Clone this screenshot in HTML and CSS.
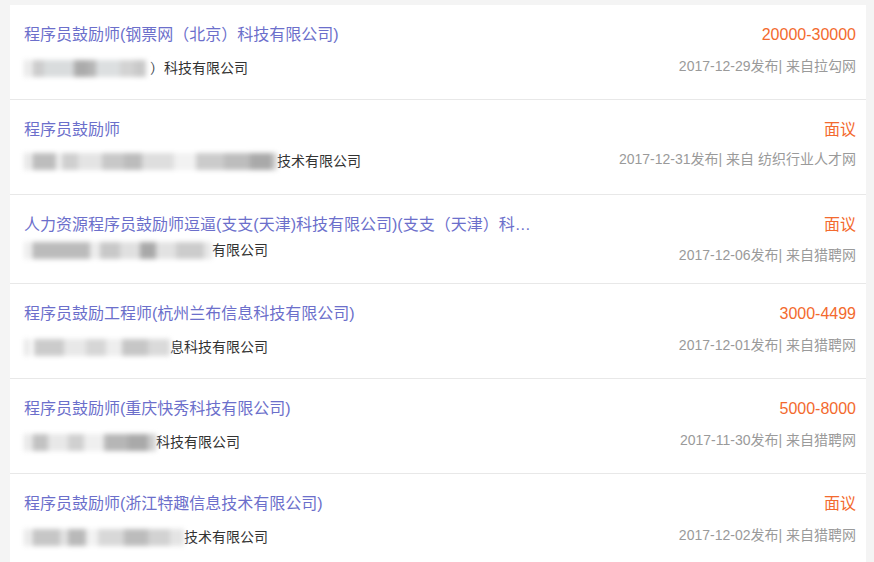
FILE: index.html
```html
<!DOCTYPE html>
<html lang="zh">
<head>
<meta charset="utf-8">
<title>职位列表</title>
<link rel="stylesheet" href="styles.css">
</head>
<body>
<div class="list">
  <div class="row">
    <div class="left">
      <div class="title">程序员鼓励师(钢票网（北京）科技有限公司)</div>
      <div class="company"><span class="blur b1"></span>）科技有限公司</div>
    </div>
    <div class="right">
      <div class="salary">20000-30000</div>
      <div class="date">2017-12-29发布| 来自拉勾网</div>
    </div>
  </div>
  <div class="row">
    <div class="left">
      <div class="title">程序员鼓励师</div>
      <div class="company c2"><span class="blur b2"></span>技术有限公司</div>
    </div>
    <div class="right">
      <div class="salary">面议</div>
      <div class="date d2">2017-12-31发布| 来自 纺织行业人才网</div>
    </div>
  </div>
  <div class="row row-short">
    <div class="left">
      <div class="title">人力资源程序员鼓励师逗逼(支支(天津)科技有限公司)(支支（天津）科…</div>
      <div class="company c3"><span class="blur b3"></span>有限公司</div>
    </div>
    <div class="right">
      <div class="salary">面议</div>
      <div class="date">2017-12-06发布| 来自猎聘网</div>
    </div>
  </div>
  <div class="row">
    <div class="left">
      <div class="title">程序员鼓励工程师(杭州兰布信息科技有限公司)</div>
      <div class="company"><span class="blur b4"></span>息科技有限公司</div>
    </div>
    <div class="right">
      <div class="salary">3000-4499</div>
      <div class="date">2017-12-01发布| 来自猎聘网</div>
    </div>
  </div>
  <div class="row">
    <div class="left">
      <div class="title">程序员鼓励师(重庆快秀科技有限公司)</div>
      <div class="company"><span class="blur b5"></span>科技有限公司</div>
    </div>
    <div class="right">
      <div class="salary">5000-8000</div>
      <div class="date">2017-11-30发布| 来自猎聘网</div>
    </div>
  </div>
  <div class="row">
    <div class="left">
      <div class="title">程序员鼓励师(浙江特趣信息技术有限公司)</div>
      <div class="company"><span class="blur b6"></span>技术有限公司</div>
    </div>
    <div class="right">
      <div class="salary">面议</div>
      <div class="date">2017-12-02发布| 来自猎聘网</div>
    </div>
  </div>
</div>
</body>
</html>
```
FILE: styles.css
```css
html, body {
  margin: 0;
  padding: 0;
  background: #f4f4f4;
}
body {
  font-family: "Liberation Sans", "Noto Sans CJK SC", sans-serif;
  padding: 5px 8px 0 10px;
  overflow: hidden;
}
.list {
  background: #fff;
}
.row {
  box-sizing: border-box;
  height: 95px;
  display: flex;
  justify-content: space-between;
  padding: 16px 10px 0 14px;
  border-bottom: 1px solid #e8e8e8;
}
.row-short {
  height: 89px;
}
.left {
  min-width: 0;
}
.title {
  font-size: 16px;
  line-height: 28px;
  color: #6c6fcb;
  white-space: nowrap;
}
.company {
  margin-top: 9px;
  font-size: 14px;
  line-height: 20px;
  color: #333;
  display: flex;
  align-items: center;
  white-space: nowrap;
}
.c2 { margin-top: 7px; }
.c3 { margin-top: 1px; }
.right {
  text-align: right;
}
.salary {
  font-size: 16px;
  line-height: 28px;
  color: #f36a2e;
}
.date {
  margin-top: 7px;
  font-size: 14px;
  line-height: 20px;
  color: #9a9a9a;
  white-space: nowrap;
}
.d2 { margin-top: 5px; }
.row-short .date { margin-top: 6px; }
.blur {
  display: inline-block;
  height: 17px;
  filter: blur(2.5px);
}
.b1 {
  width: 126px;
  background: linear-gradient(to right,
    #e8e8e8 0 6px, #fff 6px 8px, #cdcdcd 8px 20px, #d9dcdd 20px 50px,
    #ababab 50px 64px, #b5b5b5 64px 72px, #dcdfe0 72px 96px,
    #d3d3d3 96px 110px, #c9c9c9 110px 122px, #fff 122px);
}
.b2 {
  width: 253px;
  background: linear-gradient(to right,
    #e6e6e6 0 6px, #fff 6px 8px, #bdbdbd 8px 32px, #f0f0f0 32px 38px,
    #cfcfcf 38px 54px, #e4e4e4 54px 78px, #c8c8c8 78px 100px,
    #bcbcbc 100px 118px, #dedede 118px 150px, #f2f2f2 150px 172px,
    #cbcbcb 172px 200px, #bdbdbd 200px 226px, #a9a9a9 226px 248px, #cfcfcf 248px);
}
.b3 {
  width: 188px;
  background: linear-gradient(to right,
    #ececec 0 6px, #fff 6px 8px, #bbbbbb 8px 66px, #ededed 66px 76px,
    #c8c8c8 76px 96px, #e0e0e0 96px 116px, #a8a8a8 116px 132px,
    #e2e2e2 132px 152px, #cccccc 152px 180px, #e8e8e8 180px);
}
.b4 {
  width: 146px;
  background: linear-gradient(to right,
    #e8e8e8 0 6px, #fff 6px 10px, #cbcbcb 10px 40px, #e8e8e8 40px 62px,
    #d6d6d6 62px 82px, #eeeeee 82px 98px, #c6c6c6 98px 124px, #dadada 124px);
}
.b5 {
  width: 132px;
  background: linear-gradient(to right,
    #e6e6e6 0 6px, #fff 6px 8px, #c2c2c2 8px 24px, #e8e8e8 24px 44px,
    #d0d0d0 44px 60px, #efefef 60px 80px, #b6b6b6 80px 104px, #a9a9a9 104px 124px, #cfcfcf 124px);
}
.b6 {
  width: 160px;
  background: linear-gradient(to right,
    #e8e8e8 0 6px, #fff 6px 8px, #c6c6c6 8px 36px, #e2e2e2 36px 44px,
    #b9b9b9 44px 62px, #f2f2f2 62px 74px, #d8d8d8 74px 100px,
    #bcbcbc 100px 124px, #d2d2d2 124px 146px, #e4e4e4 146px);
}
```
